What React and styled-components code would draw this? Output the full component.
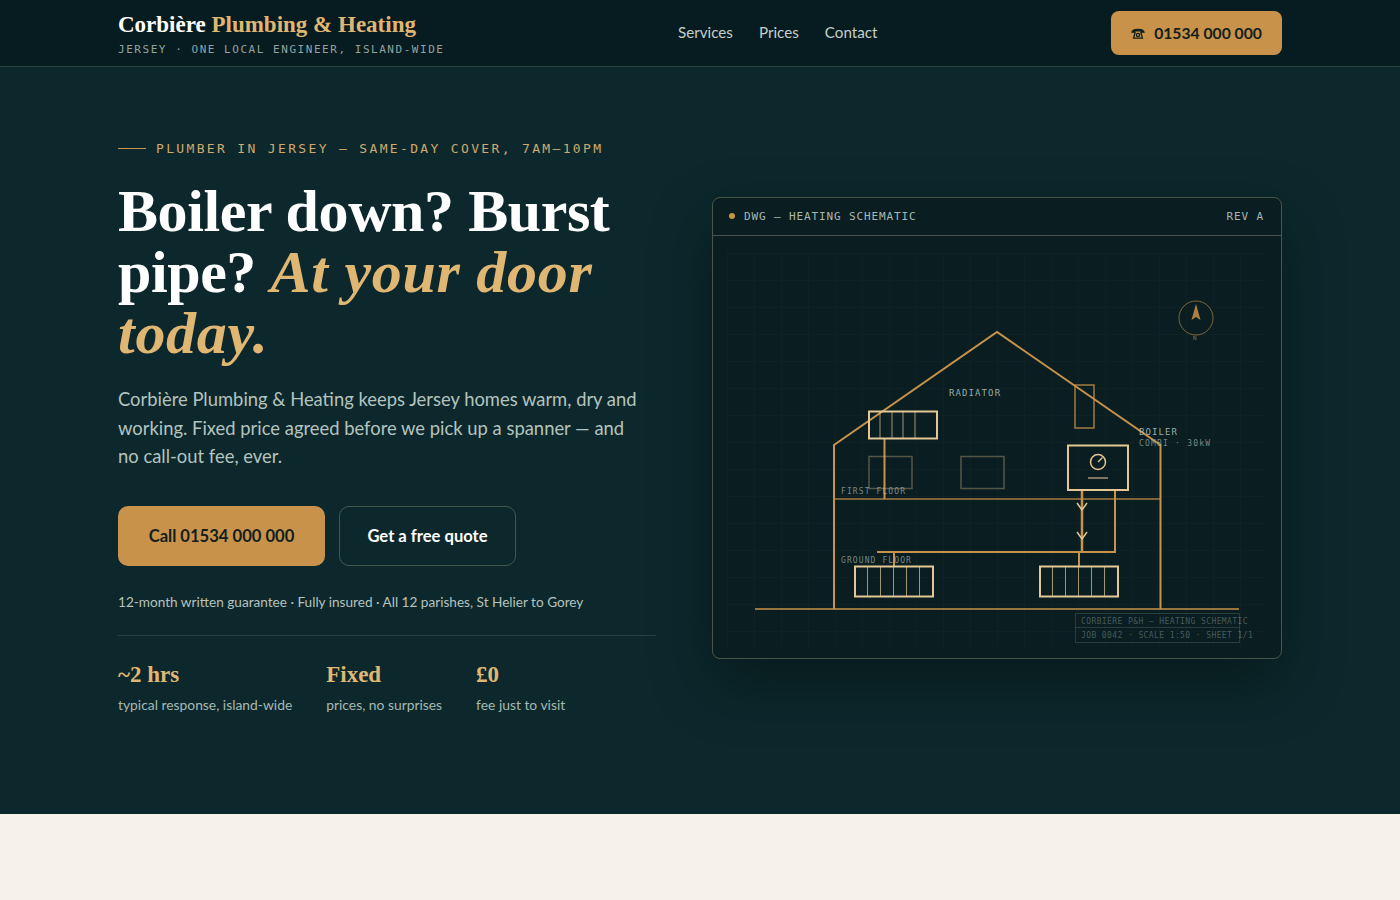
import React from 'react';
import styled, { createGlobalStyle } from 'styled-components';

const serif = `"Liberation Serif", "DejaVu Serif", serif`;
const sans = `Lato, "Noto Sans", sans-serif`;
const mono = `"DejaVu Sans Mono", "Liberation Mono", monospace`;

const topRadiatorBars = [880, 892, 903, 915];
const leftRadiatorBars = [867.5, 880.5, 893.5, 906.5, 919.5];
const rightRadiatorBars = [1052.5, 1065.5, 1078.5, 1091.5, 1104.5];

const stats = [
    { value: '~2 hrs', label: 'typical response, island-wide' },
    { value: 'Fixed', label: 'prices, no surprises' },
    { value: '£0', label: 'fee just to visit' },
];

const PhoneIcon = () => (
    <svg width="14" height="12" viewBox="0 0 14 12" fill="none" stroke="#10201f" strokeWidth="1.3">
        <path d="M1 5.2C1.6 1.4 12.4 1.4 13 5.2H10.2V3.9H3.8V5.2Z" fill="#10201f" />
        <path d="M4.2 5L2.6 11.2H11.4L9.8 5" />
        <circle cx="7" cy="8" r="1.6" />
    </svg>
);

const Schematic = () => (
    <Drawing viewBox="713 236 568 422">
        <defs>
            <pattern id="grid" x="727" y="253" width="27" height="27" patternUnits="userSpaceOnUse">
                <path d="M27 0H0V27" fill="none" stroke="#c8924a" strokeOpacity="0.05" strokeWidth="1" />
            </pattern>
        </defs>
        <rect x="727" y="253" width="540" height="393" fill="url(#grid)" />

        <g fill="none" stroke="#c8924a" strokeWidth="2">
            <path d="M834 609V445L997 332L1160.5 445V609" />
            <path d="M755 609H1239" strokeWidth="1.5" />
            <path d="M834 499H1160.5" strokeWidth="1.5" strokeOpacity="0.8" />
            <rect x="1075" y="385" width="19" height="43" strokeWidth="1.5" strokeOpacity="0.8" />
            <path d="M884.5 439V499" />
            <path d="M877 552H1115V490" />
            <path d="M1082 490V552" strokeWidth="2.5" />
            <path d="M894 552V566M1079 552V566" />
        </g>

        <g fill="none" stroke="#e2c08a" strokeWidth="1.5" strokeOpacity="0.35">
            <rect x="869" y="456.5" width="43" height="32" />
            <rect x="961" y="456.5" width="43" height="32" />
        </g>

        <g fill="none" stroke="#e4c794" strokeWidth="2">
            <rect x="869" y="411.5" width="68" height="27" />
            <rect x="855" y="566.5" width="78" height="30" />
            <rect x="1040" y="566.5" width="78" height="30" />
            <rect x="1068" y="445.5" width="60" height="44.5" />
            <path d="M1077 503L1082 510L1087 503M1077 532L1082 539L1087 532" strokeWidth="1.5" />
            <circle cx="1098" cy="462" r="7.5" strokeWidth="1.5" />
            <path d="M1098 462L1102.5 457.5" strokeWidth="1.5" />
            <path d="M1088 478H1108" strokeWidth="1.5" strokeOpacity="0.7" />
            <g strokeWidth="1" strokeOpacity="0.7">
                {topRadiatorBars.map((x) => <path key={x} d={`M${x} 412V438`} />)}
                {leftRadiatorBars.map((x) => <path key={x} d={`M${x} 567V596`} />)}
                {rightRadiatorBars.map((x) => <path key={x} d={`M${x} 567V596`} />)}
            </g>
        </g>

        <circle cx="1196" cy="318" r="17" fill="none" stroke="#c8924a" strokeOpacity="0.6" strokeWidth="1" />
        <path d="M1196 304L1200.5 320L1196 317L1191.5 320Z" fill="#c8924a" fillOpacity="0.85" />

        <Label x="949" y="396" fontSize="9" $tone={0.95}>RADIATOR</Label>
        <Label x="1139" y="435" fontSize="9" $tone={0.95}>BOILER</Label>
        <Label x="1139" y="446" fontSize="8" $tone={0.7} $track={1.2}>COMBI · 30kW</Label>
        <Label x="841" y="494" fontSize="8" $tone={0.7}>FIRST FLOOR</Label>
        <Label x="841" y="563" fontSize="8" $tone={0.7}>GROUND FLOOR</Label>
        <Label x="1193" y="340" fontSize="6" $tone={0.6} $track={0}>N</Label>

        <g fill="none" stroke="#a7b8b3" strokeOpacity="0.2" strokeWidth="1">
            <rect x="1075.5" y="613.5" width="164" height="29" />
            <path d="M1075.5 627.5H1239.5" />
        </g>
        <Label x="1081" y="624" fontSize="8" $tone={0.4} $track={0.4}>CORBIÈRE P&amp;H — HEATING SCHEMATIC</Label>
        <Label x="1081" y="638" fontSize="8" $tone={0.4} $track={0.4}>JOB 0042 · SCALE 1:50 · SHEET 1/1</Label>
    </Drawing>
);

const App = () => {
    return (
        <Page>
            <GlobalStyle />
            <Header>
                <Brand>
                    <BrandName>Corbière <span>Plumbing &amp; Heating</span></BrandName>
                    <BrandSub>JERSEY · ONE LOCAL ENGINEER, ISLAND-WIDE</BrandSub>
                </Brand>
                <Nav>
                    <a>Services</a>
                    <a>Prices</a>
                    <a>Contact</a>
                </Nav>
                <HeaderCall><PhoneIcon />01534 000 000</HeaderCall>
            </Header>

            <Hero>
                <Intro>
                    <Eyebrow>PLUMBER IN JERSEY — SAME-DAY COVER, 7AM–10PM</Eyebrow>
                    <Heading>Boiler down? Burst pipe? <em>At your door today.</em></Heading>
                    <Lead>
                        Corbière Plumbing &amp; Heating keeps Jersey homes warm, dry and working. Fixed price
                        agreed before we pick up a spanner — and no call-out fee, ever.
                    </Lead>
                    <Actions>
                        <PrimaryButton>Call 01534 000 000</PrimaryButton>
                        <GhostButton>Get a free quote</GhostButton>
                    </Actions>
                    <Note>12-month written guarantee · Fully insured · All 12 parishes, St Helier to Gorey</Note>
                    <Stats>
                        {stats.map((stat) => (
                            <div key={stat.value}>
                                <StatValue>{stat.value}</StatValue>
                                <StatLabel>{stat.label}</StatLabel>
                            </div>
                        ))}
                    </Stats>
                </Intro>

                <Card>
                    <CardHeader>
                        <CardTitle>DWG — HEATING SCHEMATIC</CardTitle>
                        <span>REV A</span>
                    </CardHeader>
                    <Schematic />
                </Card>
            </Hero>

            <NextSection />
        </Page>
    );
};

const GlobalStyle = createGlobalStyle`
  html, body {
    margin: 0;
    background: #f6f1ea;
  }
  * {
    box-sizing: border-box;
  }
`;

const Page = styled.div`
  width: 100%;
  font-family: ${sans};
  color: #fff;
`;

const Header = styled.header`
  height: 67px;
  padding: 0 118px;
  display: flex;
  justify-content: space-between;
  align-items: center;
  background: #071c20;
  border-bottom: 1px solid #2b4040;
`;

const Brand = styled.div`
  display: flex;
  flex-direction: column;
  gap: 4px;
  margin-top: 2px;
`;

const BrandName = styled.div`
  font-family: ${serif};
  font-size: 23px;
  line-height: 28px;
  font-weight: 700;
  color: #fff;

  span {
    color: #e0b673;
  }
`;

const BrandSub = styled.div`
  font-family: ${mono};
  font-size: 11px;
  line-height: 14px;
  letter-spacing: 0.14em;
  color: #93a3a0;
`;

const Nav = styled.nav`
  display: flex;
  gap: 26px;
  margin-top: -2px;

  a {
    font-size: 15.2px;
    color: #c4cfcb;
  }
`;

const HeaderCall = styled.a`
  width: 171px;
  height: 44px;
  display: flex;
  align-items: center;
  justify-content: center;
  gap: 9px;
  background: #c8924a;
  border-radius: 8px;
  color: #10201f;
  font-size: 15.7px;
  font-weight: 700;
`;

const Hero = styled.section`
  height: 747px;
  padding: 72px 118px 98px;
  display: grid;
  grid-template-columns: 538px 570px;
  justify-content: space-between;
  align-items: center;
  background: #0c282c;
`;

const Intro = styled.div`
  display: flex;
  flex-direction: column;
`;

const Eyebrow = styled.div`
  display: flex;
  align-items: center;
  gap: 10px;
  font-family: ${mono};
  font-size: 13px;
  line-height: 18px;
  letter-spacing: 0.18em;
  color: #cfa96f;

  &::before {
    content: '';
    width: 28px;
    height: 1px;
    background: #c8924a;
  }
`;

const Heading = styled.h1`
  margin: 23px 0 0;
  font-family: ${serif};
  font-size: 60px;
  line-height: 61px;
  font-weight: 700;
  letter-spacing: -0.007em;
  color: #fff;

  em {
    color: #e0b673;
    font-style: italic;
    letter-spacing: 0.012em;
  }
`;

const Lead = styled.p`
  margin: 21px 0 0;
  max-width: 530px;
  font-size: 18.4px;
  line-height: 28.8px;
  color: #b5c3bf;
`;

const Actions = styled.div`
  margin-top: 35px;
  display: flex;
  gap: 14px;
`;

const PrimaryButton = styled.a`
  width: 207px;
  height: 60px;
  display: flex;
  align-items: center;
  justify-content: center;
  background: #c8924a;
  border-radius: 10px;
  color: #10201f;
  font-size: 16.6px;
  font-weight: 700;
`;

const GhostButton = styled(PrimaryButton)`
  width: 177px;
  background: transparent;
  border: 1px solid #46564f;
  color: #fff;
`;

const Note = styled.p`
  margin: 26px 0 0;
  font-size: 13.6px;
  line-height: 20px;
  color: #b5c3bf;
`;

const Stats = styled.div`
  margin-top: 23px;
  padding-top: 24px;
  border-top: 1px solid #2b4040;
  display: flex;
  gap: 34px;
`;

const StatValue = styled.div`
  font-family: ${serif};
  font-size: 23px;
  line-height: 30px;
  font-weight: 700;
  color: #e0b673;
`;

const StatLabel = styled.div`
  margin-top: 5px;
  font-size: 13.85px;
  line-height: 20px;
  color: #a7b8b3;
`;

const Card = styled.div`
  height: 462px;
  display: flex;
  flex-direction: column;
  background: #0a1e22;
  border: 1px solid #4a5547;
  border-radius: 8px;
  box-shadow: 0 24px 60px rgba(0, 0, 0, 0.35);
  overflow: hidden;
`;

const CardHeader = styled.div`
  height: 38px;
  flex: none;
  padding: 0 17px 0 16px;
  display: flex;
  align-items: center;
  justify-content: space-between;
  border-bottom: 1px solid #4a5547;
  font-family: ${mono};
  font-size: 11px;
  letter-spacing: 0.08em;
  color: #a7b8b3;
`;

const CardTitle = styled.span`
  display: flex;
  align-items: center;
  gap: 9px;

  &::before {
    content: '';
    width: 6px;
    height: 6px;
    border-radius: 50%;
    background: #c8924a;
  }
`;

const Drawing = styled.svg`
  display: block;
  flex: none;
  width: 568px;
  height: 422px;
`;

const Label = styled.text`
  font-family: ${mono};
  letter-spacing: ${(props) => props.$track ?? 1.1}px;
  fill: #a7b8b3;
  fill-opacity: ${(props) => props.$tone};
`;

const NextSection = styled.section`
  height: 86px;
  background: #f6f1ea;
`;

export default App;
